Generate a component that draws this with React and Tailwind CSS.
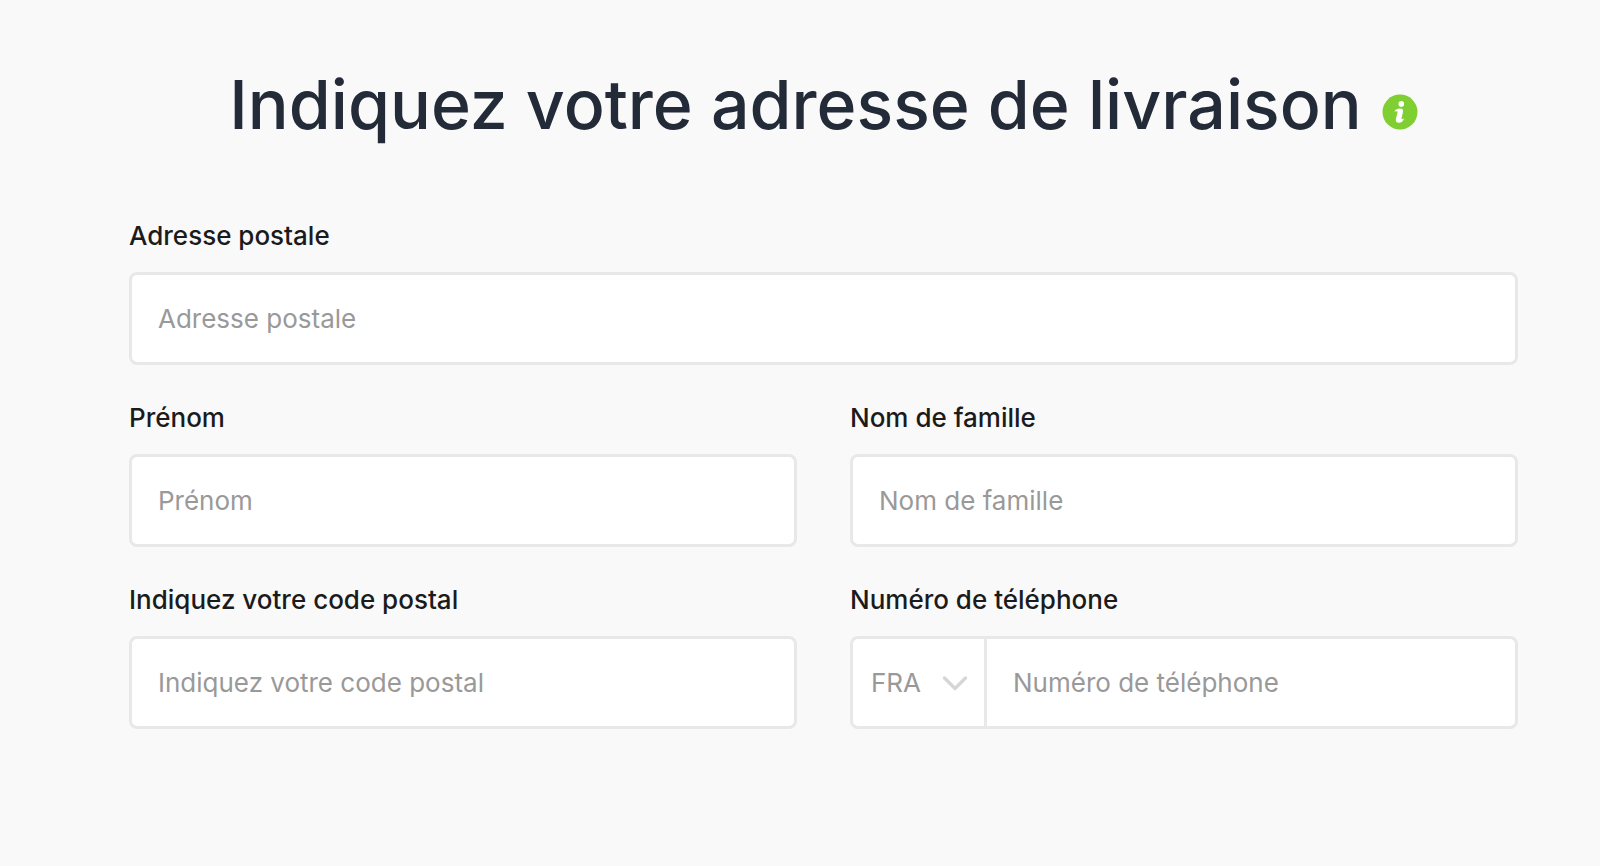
import { useState } from 'react';

const inputStyle = 'px-[26px] text-[26px] text-[#1b1b1b] placeholder:text-[#999] outline-none';
const boxStyle = 'w-full h-[93px] bg-white border-3 border-[#e8e8e8] rounded-lg';
const labelStyle = 'block mb-5 text-[26px] leading-8 font-medium';

function InfoIcon() {
  return (
    <svg viewBox="0 0 36 36" className="w-9 h-9" aria-hidden="true">
      <circle cx="18" cy="18" r="17.5" fill="#7fcf33" />
      <circle cx="19.3" cy="9.9" r="2.8" fill="#fff" />
      <path
        d="M12.3 17.6C13.3 15.6 15.5 14.5 18 14.5C20.6 14.5 21.5 15.9 21 18L19.5 24.3C19.3 25.4 19.9 25.6 20.6 25.1L22 24.4C21.3 27 19.3 28.7 16.9 28.7C14.3 28.7 13.4 27.2 13.9 25L15.5 18.4C15.7 17.4 15 17.1 14.3 17.3Z"
        fill="#fff"
      />
    </svg>
  );
}

function Field({ name, label, value, onChange, className = '' }) {
  return (
    <div className={className}>
      <label htmlFor={name} className={labelStyle}>{label}</label>
      <input id={name} name={name} placeholder={label} value={value} onChange={onChange} className={`${boxStyle} ${inputStyle}`} />
    </div>
  );
}

export default function App() {
  const [form, setForm] = useState({ address: '', firstName: '', lastName: '', postcode: '', country: 'FRA', phone: '' });

  const handleChange = (e) => setForm({ ...form, [e.target.name]: e.target.value });

  return (
    <main className="min-h-screen bg-[#f9f9f9] pt-16 pb-32 pl-[129px] pr-[82px] font-['Inter',sans-serif] text-[#1b1b1b]">
      <div className="flex items-center justify-center gap-5 mb-[76px]">
        <h1 className="text-[68px] leading-20 font-medium text-[#242b38]">Indiquez votre adresse de livraison</h1>
        <button type="button" aria-label="Informations" className="shrink-0 pt-4">
          <InfoIcon />
        </button>
      </div>
      <form className="grid grid-cols-2 gap-x-[53px] gap-y-[37px]">
        <Field name="address" label="Adresse postale" value={form.address} onChange={handleChange} className="col-span-2" />
        <Field name="firstName" label="Prénom" value={form.firstName} onChange={handleChange} />
        <Field name="lastName" label="Nom de famille" value={form.lastName} onChange={handleChange} />
        <Field name="postcode" label="Indiquez votre code postal" value={form.postcode} onChange={handleChange} />
        <div>
          <label htmlFor="phone" className={labelStyle}>Numéro de téléphone</label>
          <div className={`${boxStyle} flex`}>
            <div className="relative w-[134px] shrink-0 border-r-3 border-[#e8e8e8]">
              <select name="country" aria-label="Pays" value={form.country} onChange={handleChange} className="appearance-none w-full h-full pl-[18px] text-[26px] text-[#999] bg-transparent outline-none">
                <option>FRA</option>
                <option>BEL</option>
                <option>CHE</option>
              </select>
              <svg viewBox="0 0 26 16" className="absolute right-4 top-1/2 -translate-y-1/2 w-[26px] h-4 pointer-events-none" aria-hidden="true">
                <path d="M2.5 3L13 13.5L23.5 3" fill="none" stroke="#d6d6d6" strokeWidth="3.4" strokeLinecap="round" strokeLinejoin="round" />
              </svg>
            </div>
            <input id="phone" name="phone" type="tel" placeholder="Numéro de téléphone" value={form.phone} onChange={handleChange} className={`flex-1 min-w-0 ${inputStyle}`} />
          </div>
        </div>
      </form>
    </main>
  );
}
